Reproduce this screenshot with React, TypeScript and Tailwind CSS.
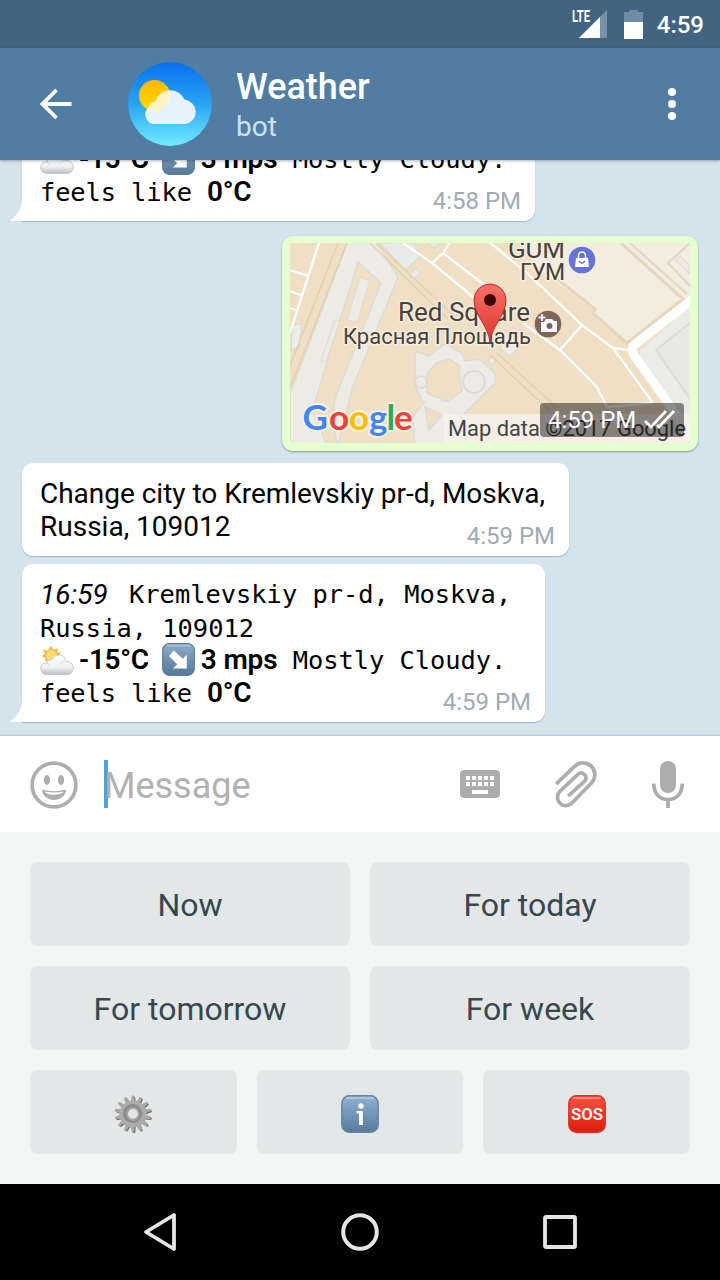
import type { ReactNode } from "react";

const mono = "relative -top-px font-['DejaVu_Sans_Mono',monospace] text-[25.4px] whitespace-pre";

function Bubble({ children, time, className, tail }: { children: ReactNode; time: string; className: string; tail?: boolean }) {
  return (
    <div className={`relative shrink-0 bg-white pl-[18px] text-[28px] text-black shadow-[0_1px_1px_rgba(110,140,165,0.55)] ${className}`}>
      {tail && (
        <svg className="absolute bottom-0 -left-3" width="13" height="26" viewBox="0 0 13 26">
          <path d="M13 0H12V5C11.5 14 7 21 0 25.2Q0 26 2 26H13Z" fill="#fff" />
        </svg>
      )}
      {children}
      <span className="absolute right-[14px] bottom-[6px] text-[24px] leading-[28px] text-[#a1aab3]">{time}</span>
    </div>
  );
}

function CloudSun() {
  return (
    <svg className="mr-[5px] shrink-0" width="34" height="34" viewBox="0 0 34 34">
      <defs>
        <linearGradient id="cloudShade" x1="0" y1="0" x2="0" y2="1">
          <stop offset="0" stopColor="#fff" />
          <stop offset=".65" stopColor="#eef0f2" />
          <stop offset="1" stopColor="#b9bfc4" />
        </linearGradient>
      </defs>
      <path d="M11 2L13 7L18 5L17 9L21 11L17 13L15 19L5 18L6 15L1 13L5 11L3 6L8 8Z" fill="#f3b93d" />
      <circle cx="11.5" cy="12.5" r="6" fill="#ffdc7a" stroke="#e9a92d" strokeWidth=".8" />
      <path d="M7 31.5C2.500 31.500 0.700 28.500 0.700 25.500C0.700 22 3.500 19.600 6.500 19.800C7.500 17.300 9.500 16.500 11.600 17C13 13.500 16 12 18.700 12C22.500 12 25.500 14.500 25.500 18.500C30 18 33.300 21 33.300 25C33.300 29 30.500 31.500 27 31.500Z" fill="url(#cloudShade)" stroke="#bcc1c5" strokeWidth=".8" />
      <path d="M6 20Q9 20 10 23M25 18.500Q22 18.500 20.500 21" fill="none" stroke="#d4d7d9" strokeWidth="1" />
    </svg>
  );
}

function Tile({ id, top, bottom, edge, size, className, children }: { id: string; top: string; bottom: string; edge: string; size: number; className?: string; children: ReactNode }) {
  return (
    <svg className={`shrink-0 ${className ?? ""}`} width={size} height={size} viewBox="0 0 38 38">
      <defs>
        <linearGradient id={id} x1="0" y1="0" x2="0" y2="1">
          <stop offset="0" stopColor={top} />
          <stop offset="1" stopColor={bottom} />
        </linearGradient>
      </defs>
      <rect x=".8" y=".8" width="36.400" height="36.400" rx="7.500" fill={`url(#${id})`} stroke={edge} strokeWidth="1.400" />
      <path d="M6 3H32" stroke="#fff" strokeOpacity=".3" strokeWidth="2" strokeLinecap="round" />
      {children}
    </svg>
  );
}

function Forecast({ city, tail }: { city: boolean; tail: string }) {
  return (
    <div className="flex flex-col">
      <div className="flex h-[33px] leading-[33px] whitespace-pre"><i className="-mt-px">16:59</i><span className={`${mono} ml-[6px]`}>{" Kremlevskiy pr-d, Moskva,"}</span></div>
      <div className="h-[32px] leading-[33px]"><span className={mono}>{city ? "Russia, 109012" : "Russia"}</span></div>
      <div className="-mt-px flex h-[33px] items-center leading-[33px]">
        <CloudSun />
        <b className="font-semibold tracking-[-0.35px]">-15°C</b>
        <Tile id={tail} top="#8eabc7" bottom="#55799a" edge="#5d7f9f" size={33} className="ml-[13px] mr-[6px]">
          <path d="M13.500 8.500L24 18L28.500 13.500V29.500H12.500L17.500 24.500L8 15Z" fill="#fff" />
        </Tile>
        <b className="font-semibold tracking-[-0.1px]">3 mps</b>
        <span className="relative top-px font-['DejaVu_Sans_Mono',monospace] text-[25.4px] tracking-[-0.05px] whitespace-pre">{" Mostly Cloudy."}</span>
      </div>
      <div className="h-[33px] leading-[33px] whitespace-pre"><span className="font-['DejaVu_Sans_Mono',monospace] text-[25.4px] tracking-[-0.1px]">{"feels like "}</span><b className="font-semibold tracking-[-0.3px]">0°C</b></div>
    </div>
  );
}

function MapPicture() {
  return (
    <svg className="block rounded-[3px]" width="400" height="200" viewBox="0 0 400 200" fontFamily="Roboto, sans-serif">
      <rect width="400" height="200" fill="#efdfc5" />
      <path d="M230 0H400V70L337 101L303 70L302 66L250 27Z" fill="#f3ecdf" />
      <path d="M331 0L393 56L337 100L303 70L305 66L262 32" fill="none" stroke="#e5d6bd" strokeWidth="3" />
      <path d="M340 0L397 51M400 0L378 20L400 43" fill="none" stroke="#e2d5c1" strokeWidth="2" />
      <path d="M390 13L400 23V31L385 17Z" fill="#eceae6" stroke="#dbd7d1" />
      <g fill="#edebe6" stroke="#dfdbd1" strokeWidth="1.500">
        <path d="M58 -2L0 151V202H48L62 146L108 34L86 -2Z" />
        <path d="M2 83L12 80L9 104L1 108Z" />
        <path d="M90 0H124L130 14L115 27Z" fill="#e9eaea" />
        <path d="M119 32L126 25L130 30L123 37Z" />
        <path d="M125 108L139 113L155 101L172 110L175 118L189 116L205 130V140L165 180L160 202H125L123 173L134 160L125 143Z" />
        <path d="M137 -1L144 5L153 0Z" />
        <path d="M213 92L222 84L232 94L227 106L220 114L211 106Z" />
        <path d="M198 118L202 113L206 117L202 122Z" />
      </g>
      <g fill="#efdfc5" stroke="#dfdbd1" strokeWidth="1.500">
        <path d="M137 131L146 120L159 116L170 123L169 129L172 148L157 159L137 150Z" />
        <path d="M135 164L152 172L139 187Z" />
        <path d="M68 19L91 40L45 155L42 181L48 202H37L22 168Z" />
      </g>
      <path d="M70 35L80 37L67 79L57 77ZM45 77L50 78L36 119L31 118Z" fill="#edebe6" stroke="#dfdbd1" />
      <g fill="#edebe6" stroke="#dad8d1" strokeWidth="1.600">
        <circle cx="184" cy="139" r="11" />
        <circle cx="131" cy="139" r="6" />
      </g>
      <path d="M57 0L0 145M48 0L0 123M80 0L158 76M86 0L172 80M200 112L260 168M207 110L266 164" fill="none" stroke="#e2d0ac" strokeWidth="1.300" />
      <path d="M400 65L350 107V113L400 181Z" fill="#ebebe8" />
      <path d="M400 80L366 107L400 156" fill="#e8e8e6" stroke="#dcdcda" strokeWidth="2" />
      <g fill="none" stroke="#fff" strokeWidth="2.300">
        <path d="M29 0L0 90M0 27L19 33M0 48L11 52M0 65L6 67" />
        <path d="M113 0L142 20L183 54M160 -1L153 10L142 20M153 10L197 44" />
        <path d="M198 -2L237 30L292 82L323 105L363 160M233 80L270 107L307 144L317 164L363 160M292 82L270 107M323 105L339 107" />
      </g>
      <path d="M403 56L343 103Q341 107 344 112L404 196" fill="none" stroke="#fff" strokeWidth="9" />
      <g fill="#47403b" stroke="#f5eddf" strokeWidth="3" paintOrder="stroke" strokeLinejoin="round">
        <text x="218" y="15" fontSize="26" textLength="57">GUM</text>
        <text x="230" y="37" fontSize="23" textLength="45">ГУМ</text>
        <text x="108" y="78" fontSize="26" textLength="132">Red Square</text>
        <text x="53" y="101" fontSize="22" textLength="188">Красная Площадь</text>
      </g>
      <circle cx="292" cy="17" r="13.300" fill="#6673d9" />
      <path d="M286 15H298L299 24H285Z" fill="#fff" />
      <path d="M288.500 15V12.500A3.500 3.500 0 0 1 295.500 12.500V15" fill="none" stroke="#fff" strokeWidth="1.500" />
      <path d="M289 18Q292 22 295 18" fill="none" stroke="#6673d9" strokeWidth="1.500" />
      <circle cx="258" cy="81" r="13.300" fill="#80635a" />
      <path d="M251 79H254L256 76H262L264 78H267V89H251Z" fill="#fff" />
      <circle cx="259.500" cy="83" r="3" fill="#80635a" />
      <path d="M252 71V78M248.500 74.500H255.500" stroke="#fff" strokeWidth="1.800" />
      <defs>
        <linearGradient id="pin" x1="0" y1="0" x2="0" y2="1">
          <stop offset="0" stopColor="#f5706a" />
          <stop offset="1" stopColor="#e0332e" />
        </linearGradient>
      </defs>
      <path d="M200 100C198.500 82 184 73 184 57A16 16 0 0 1 216 57C216 73 201.500 82 200 100Z" fill="url(#pin)" stroke="#b8322d" strokeWidth="1" />
      <circle cx="200" cy="57" r="6" fill="#3c0705" />
      <text y="187" fontFamily="Lato, sans-serif" fontSize="35" fontWeight="700" stroke="#f7f0e4" strokeWidth="4" paintOrder="stroke" strokeLinejoin="round">
        <tspan x="12.500" fill="#4285f4">G</tspan>
        <tspan x="39" fill="#ea4335">o</tspan>
        <tspan x="59" fill="#fbbc05">o</tspan>
        <tspan x="79" fill="#4285f4">g</tspan>
        <tspan x="96.500" fill="#34a853">l</tspan>
        <tspan x="104" fill="#ea4335">e</tspan>
      </text>
      <rect x="154" y="171" width="246" height="29" fill="#f7f3ee" fillOpacity=".82" />
      <text x="158" y="193" fontSize="22" fill="#444" textLength="238" lengthAdjust="spacingAndGlyphs">Map data ©2017 Google</text>
    </svg>
  );
}

function Key({ children }: { children: ReactNode }) {
  return <button className="flex h-[84px] flex-1 items-center justify-center rounded-[7px] bg-[#e3e7e8] pt-[2px] text-[32px] text-[#36474f]">{children}</button>;
}

function Gear() {
  const teeth = Array.from({ length: 14 }, (_, i) => i * (360 / 14));
  return (
    <svg className="mt-[2px]" width="38" height="38" viewBox="0 0 38 38">
      <g fill="#666" transform="translate(.9 .9)">
        {teeth.map((a) => <path key={a} d="M17 8L17.700 1.300Q19 .2 20.200 1.300L21 8Z" transform={`rotate(${a} 19 19)`} />)}
      </g>
      <g fill="#a6a6a6">
        {teeth.map((a) => <path key={a} d="M16.800 8L17.700 .8Q19 0 20.200 .8L21.200 8Z" transform={`rotate(${a} 19 19)`} />)}
      </g>
      <circle cx="19" cy="19" r="9.300" fill="none" stroke="#acacac" strokeWidth="8.500" />
      <circle cx="18.500" cy="18.500" r="7.500" fill="none" stroke="#8c8c8c" strokeWidth="4" />
      <circle cx="19" cy="19" r="5.900" fill="none" stroke="#aaa" strokeWidth="1.500" />
    </svg>
  );
}

export default function App() {
  return (
    <div className="flex h-[1280px] w-[720px] flex-col overflow-hidden bg-[#d5e3ec] font-[Roboto,sans-serif]">
      <div className="flex h-12 shrink-0 items-center justify-end bg-[#426480] pr-4">
        <svg width="80" height="48" viewBox="0 0 80 48">
          <text x="5" y="22" fontSize="17" fontWeight="700" fill="#fff" textLength="18" lengthAdjust="spacingAndGlyphs">LTE</text>
          <path d="M40 10V38H12Z" fill="#7893a9" />
          <path d="M33 17V38H12Z" fill="#fff" />
          <path d="M57 22V12H62V10H71V12H76V22Z" fill="#6f8ca4" />
          <path d="M57 22H76V39H57Z" fill="#fff" />
        </svg>
        <span className="mt-px ml-[10px] text-[24px] font-medium text-white">4:59</span>
      </div>

      <header className="relative z-10 flex h-28 shrink-0 items-center bg-[#517da2] shadow-[0_1px_3px_rgba(0,0,0,0.3)]">
        <svg className="ml-10" width="32" height="32" viewBox="0 0 32 32">
          <path d="M31.500 16H3M16.500 2L2.500 16L16.500 30" fill="none" stroke="#fff" strokeWidth="3.800" />
        </svg>
        <svg className="ml-14" width="84" height="84" viewBox="0 0 84 84">
          <defs>
            <linearGradient id="sky" x1="0" y1="0" x2="0" y2="1">
              <stop offset="0" stopColor="#0b70ed" />
              <stop offset=".5" stopColor="#29a4f3" />
              <stop offset="1" stopColor="#72ebff" />
            </linearGradient>
            <linearGradient id="sunFill" x1="0" y1="0" x2="0" y2="1">
              <stop offset="0" stopColor="#ffb800" />
              <stop offset="1" stopColor="#ffdc00" />
            </linearGradient>
          </defs>
          <circle cx="42" cy="42" r="42" fill="url(#sky)" />
          <circle cx="26.500" cy="33.500" r="15.500" fill="url(#sunFill)" />
          <path id="cloudShape" d="M28 62A9.500 9.500 0 0 1 20.500 45.500A9 9 0 0 1 27.500 39.500A15.500 15.500 0 0 1 56.500 37.500A13 12.500 0 0 1 58 62Z" fill="#edf6fc" fillOpacity=".96" />
          <clipPath id="sunClip"><circle cx="26.500" cy="33.500" r="15.500" /></clipPath>
          <path d="M28 62A9.500 9.500 0 0 1 20.500 45.500A9 9 0 0 1 27.500 39.500A15.500 15.500 0 0 1 56.500 37.500A13 12.500 0 0 1 58 62Z" clipPath="url(#sunClip)" fill="#fff3c8" />
        </svg>
        <div className="ml-6 flex flex-col pt-[2px]">
          <span className="text-[36px] leading-[42px] font-medium text-white">Weather</span>
          <span className="mt-[1px] text-[28px] leading-[36px] text-[#cbe3f7]">bot</span>
        </div>
        <div className="mr-11 ml-auto flex flex-col gap-1">
          <i className="size-2 rounded-full bg-white" />
          <i className="size-2 rounded-full bg-white" />
          <i className="size-2 rounded-full bg-white" />
        </div>
      </header>

      <main className="flex h-[576px] shrink-0 flex-col justify-end overflow-hidden bg-[#d5e3ec] pb-[14px] pl-[22px]">
        <Bubble time="4:58 PM" tail className="h-[158px] w-[513px] rounded-[11px] rounded-bl-none pt-[15px]">
          <Forecast city={false} tail="windA" />
        </Bubble>
        <div className="relative mt-[15px] mr-[22px] h-[215px] w-[416px] shrink-0 self-end rounded-[11px] bg-[#e6ffd1] px-2 pt-[7px] shadow-[0_1px_2px_rgba(90,130,110,0.7)]">
          <MapPicture />
          <div className="absolute right-[14px] bottom-[14px] flex h-[34px] w-[144px] items-center rounded-[4px] bg-black/45 pl-2 text-[24px] text-white">
            4:59 PM
            <svg className="ml-[8px]" width="32" height="22" viewBox="0 0 32 22">
              <path d="M1 12L7 18L22 2M13 16L15 18L30 2" fill="none" stroke="#fff" strokeWidth="2.800" />
            </svg>
          </div>
        </div>
        <Bubble time="4:59 PM" className="mt-3 h-[93px] w-[547px] rounded-[11px] pt-[14px] leading-[33px]">
          <div className="tracking-[-0.02px] whitespace-nowrap">Change city to Kremlevskiy pr-d, Moskva,</div>
          <div>Russia, 109012</div>
        </Bubble>
        <Bubble time="4:59 PM" tail className="mt-2 h-[158px] w-[523px] rounded-[11px] rounded-bl-none pt-[15px]">
          <Forecast city tail="windB" />
        </Bubble>
      </main>

      <div className="relative flex h-24 shrink-0 items-center bg-white shadow-[0_-1px_2px_rgba(90,130,160,0.35)]">
        <svg className="mt-[2px] ml-[30px]" width="48" height="48" viewBox="0 0 48 48">
          <circle cx="24" cy="24" r="21.900" fill="none" stroke="#adadad" strokeWidth="3.600" />
          <ellipse cx="17" cy="19" rx="3.100" ry="5" fill="#adadad" />
          <ellipse cx="31" cy="19" rx="3.100" ry="5" fill="#adadad" />
          <path d="M12 28.500Q24 32 36 28.500C36 34.500 30 39 24 39S12 34.500 12 28.500ZM14.500 30.500C17 34.800 31 34.800 33.500 30.500Q24 32.500 14.500 30.500Z" fill="#adadad" fillRule="evenodd" />
        </svg>
        <i className="-mt-px ml-[26px] h-12 w-[4px] bg-[#51a0db]" />
        <span className="relative z-10 -ml-[4px] mt-[3px] text-[36px] text-[#b2b2b2]">Message</span>
        <svg className="ml-auto" width="40" height="28" viewBox="0 0 40 28">
          <rect width="40" height="28" rx="4" fill="#adadad" />
          <path d="M6 6h4v4H6zM12 6h4v4h-4zM18 6h4v4h-4zM24 6h4v4h-4zM30 6h4v4h-4zM6 12h4v4H6zM12 12h4v4h-4zM18 12h4v4h-4zM24 12h4v4h-4zM30 12h4v4h-4zM12 20h16v4H12z" fill="#fff" />
        </svg>
        <svg className="ml-[54px]" width="44" height="48" viewBox="0 0 44 48">
          <path d="M1.800 23.500L20 6A11.700 11.700 0 0 1 37.500 22L18 42A8 8 0 0 1 5.300 31L25 12.500A5.200 5.200 0 0 1 31 20L14 35.500" transform="translate(.2 .7)" fill="none" stroke="#adadad" strokeWidth="3.700" />
        </svg>
        <svg className="mr-9 ml-[54px]" width="32" height="48" viewBox="0 0 32 48">
          <rect x="8" y="1" width="16" height="32" rx="8" fill="#adadad" />
          <path d="M1.800 23.500C1.800 34 8 39.500 16 39.500S30.200 34 30.200 23.500M16 39V48" fill="none" stroke="#adadad" strokeWidth="3.700" />
        </svg>
      </div>

      <section className="flex h-[352px] shrink-0 flex-col gap-5 bg-[#f4f6f6] px-[30px] pt-[30px]">
        <div className="flex gap-5"><Key>Now</Key><Key>For today</Key></div>
        <div className="flex gap-5"><Key>For tomorrow</Key><Key>For week</Key></div>
        <div className="flex gap-5">
          <Key><Gear /></Key>
          <Key>
            <Tile id="infoTile" top="#91b1d1" bottom="#557b9d" edge="#6483a0" size={38} className="mt-[2px]">
              <circle cx="20" cy="11" r="2.700" fill="#fff" />
              <path d="M15.500 16H21.800V30H18V18.500H15.500Z" fill="#fff" />
            </Tile>
          </Key>
          <Key>
            <Tile id="sosTile" top="#ff5141" bottom="#dc1d0c" edge="#d63624" size={38} className="mt-[2px]">
              <text x="19" y="25" textAnchor="middle" fontFamily="Roboto, sans-serif" fontWeight="600" fontSize="16.500" textLength="32" lengthAdjust="spacingAndGlyphs" fill="#fff">SOS</text>
            </Tile>
          </Key>
        </div>
      </section>

      <nav className="flex h-24 shrink-0 items-center justify-between bg-black px-[140px]">
        <svg width="40" height="40" viewBox="0 0 40 40"><path d="M34 3V37L6 20Z" fill="none" stroke="#e6e6e6" strokeWidth="3.800" strokeLinejoin="round" /></svg>
        <svg width="40" height="40" viewBox="0 0 40 40"><circle cx="20" cy="20" r="16.800" fill="none" stroke="#e6e6e6" strokeWidth="4" /></svg>
        <svg width="40" height="40" viewBox="0 0 40 40"><rect x="5" y="5" width="30" height="30" rx="1" fill="none" stroke="#e6e6e6" strokeWidth="3.800" /></svg>
      </nav>
    </div>
  );
}
